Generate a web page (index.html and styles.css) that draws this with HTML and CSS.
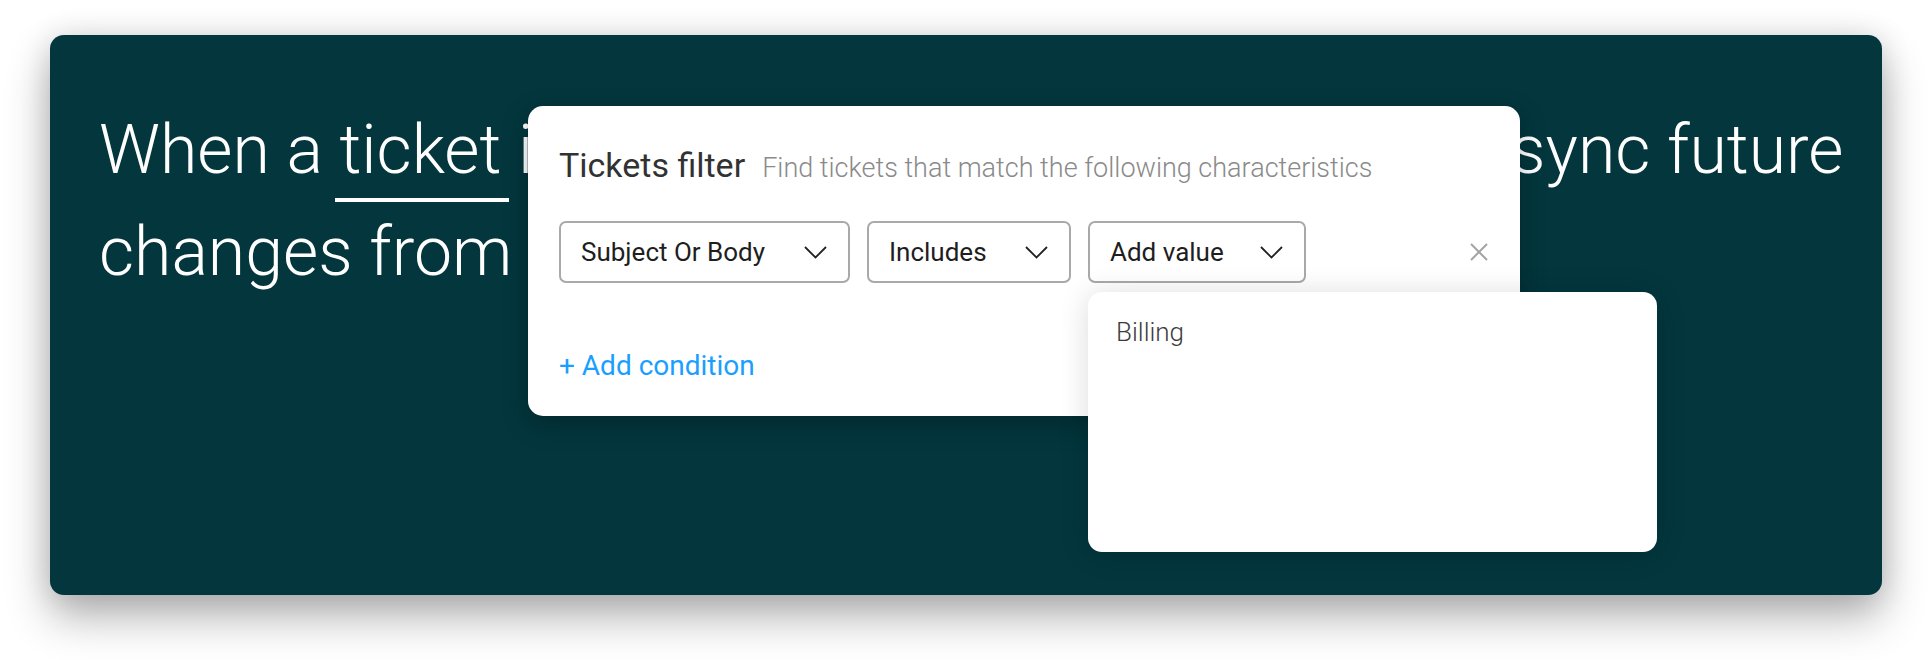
FILE: index.html
```html
<!DOCTYPE html>
<html>
<head>
  <title>Tickets filter</title>
  <link rel="stylesheet" href="styles.css">
</head>
<body>

  <div class="card">
    <h1 class="headline">
      When a <span class="hl-word">ticket</span> is created, create a new <span class="hl-word">item</span> and sync future<br>
      changes from Zendesk
    </h1>

    <div class="filter">
      <div class="filter-head">
        <span class="filter-title">Tickets filter</span>
        <span class="filter-sub">Find tickets that match the following characteristics</span>
      </div>

      <div class="filter-row">
        <div class="select select-field">
          <span class="select-value">Subject Or Body</span>
          <svg class="chevron" width="23" height="13" viewBox="0 0 23 13"><polyline points="1,1 11.5,11.5 22,1" /></svg>
        </div>
        <div class="select select-op">
          <span class="select-value">Includes</span>
          <svg class="chevron" width="23" height="13" viewBox="0 0 23 13"><polyline points="1,1 11.5,11.5 22,1" /></svg>
        </div>
        <div class="select select-val">
          <span class="select-value">Add value</span>
          <svg class="chevron" width="23" height="13" viewBox="0 0 23 13"><polyline points="1,1 11.5,11.5 22,1" /></svg>

          <!-- open options list -->
          <div class="dropdown">
            <div class="option">Billing</div>
          </div>
        </div>

        <svg class="remove" width="18" height="18" viewBox="0 0 18 18">
          <line x1="1" y1="1" x2="17" y2="17" />
          <line x1="17" y1="1" x2="1" y2="17" />
        </svg>
      </div>

      <div class="add-condition">+ Add condition</div>
    </div>
  </div>

</body>
</html>
```

FILE: styles.css
```css
body { margin: 0; padding-bottom: 65px; background: #fff; font-family: Roboto, "Liberation Sans", sans-serif; }

.card {
  position: relative;
  box-sizing: border-box;
  height: 560px;
  margin: 35px 50px 0;
  padding: 64px 39px 0 49px;
  background: #03363d;
  border-radius: 14px;
  box-shadow: 0 22px 44px rgba(0, 0, 0, 0.3), 0 0 30px rgba(0, 0, 0, 0.12);
}

.headline { margin: 0; font-size: 68px; font-weight: 300; line-height: 102px; color: #fff; white-space: nowrap; }
.hl-word { position: relative; }
.hl-word::after {
  content: "";
  position: absolute;
  left: -4px;
  right: -8px;
  bottom: -12px;
  height: 4px;
  background: #fff;
}

.filter {
  position: absolute;
  left: 478px;
  top: 71px;
  box-sizing: border-box;
  width: 992px;
  height: 310px;
  padding: 39px 32px 0 31px;
  background: #fff;
  border-radius: 15px;
  box-shadow: 0 8px 26px rgba(0, 0, 0, 0.25);
}

.filter-head { display: flex; align-items: baseline; gap: 17px; line-height: 40px; }
.filter-title { font-size: 34px; color: #323232; }
.filter-sub { font-size: 27px; font-weight: 300; color: #8a8a8a; }

.filter-row { display: flex; align-items: center; gap: 17px; margin-top: 33px; }
.select {
  position: relative;
  box-sizing: border-box;
  display: flex;
  align-items: center;
  justify-content: space-between;
  height: 62px;
  padding: 0 21px 0 20px;
  border: 2px solid #a9a9a9;
  border-radius: 7px;
  font-size: 26px;
  color: #1e1e1e;
}
.select-field { width: 291px; }
.select-op { width: 204px; }
.select-val { width: 218px; }
.chevron { fill: none; stroke: #222; stroke-width: 1.8; }
.remove { margin-left: auto; stroke: #a3a3a3; stroke-width: 2; }

.add-condition { margin-top: 66px; font-size: 28px; color: #1a9fff; }

.dropdown {
  position: absolute;
  left: -2px;
  top: calc(100% + 11px);
  box-sizing: border-box;
  width: 569px;
  height: 260px;
  padding: 25px 28px;
  background: #fff;
  border-radius: 14px;
  box-shadow: 0 2px 30px rgba(0, 0, 0, 0.14);
}
.option { font-size: 26px; font-weight: 300; color: #3c3c3c; }
```
